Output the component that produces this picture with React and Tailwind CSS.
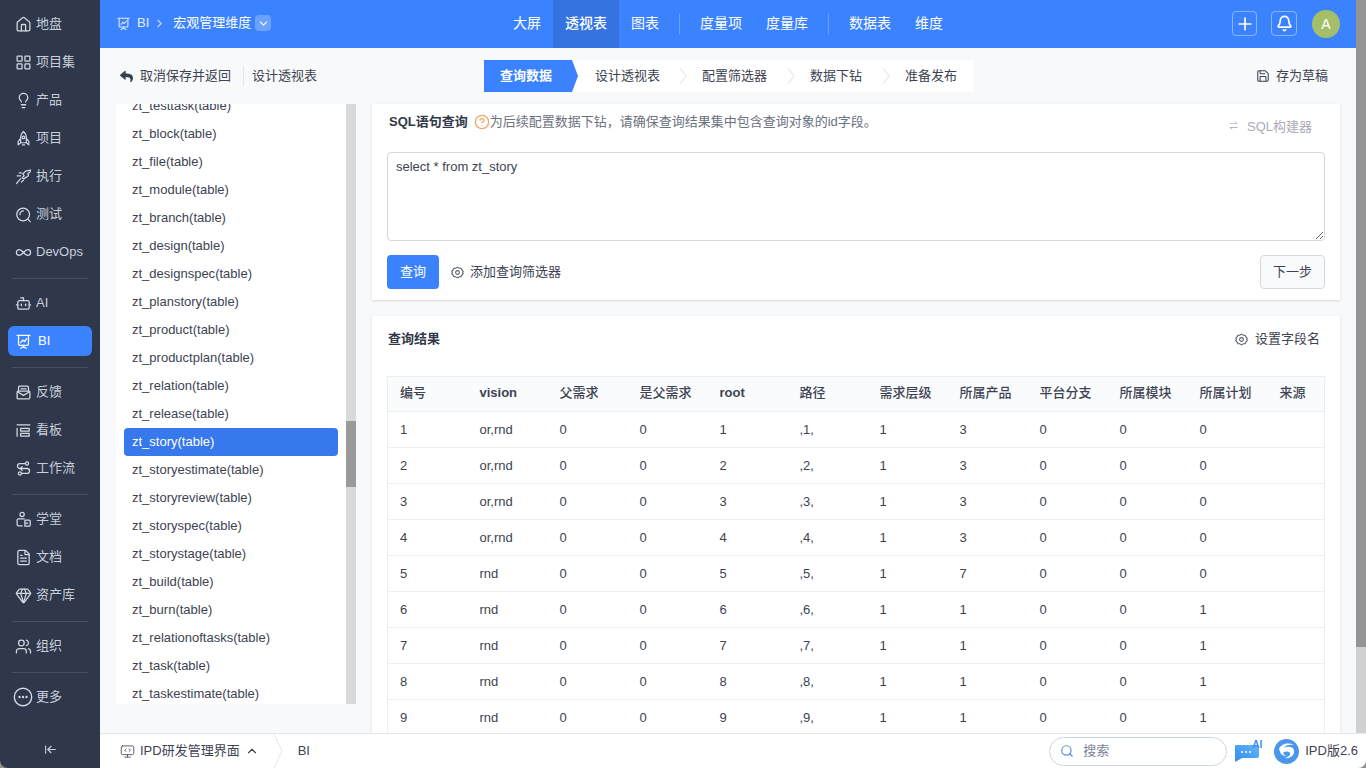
import React from "react";
import {
  ArrowLeftToLine, Bell, ChevronDown, ChevronRight, ChevronUp, FileText, Gem, Home,
  Infinity as InfinityIcon, LayoutGrid, Lightbulb, Plus, Save, Search, Users, Bot, CircleHelp,
} from "lucide-react";
import { FaReply } from "react-icons/fa";

const font = "font-['Liberation_Sans','Noto_Sans_CJK_SC',sans-serif]";

const IconBox = ({ children, size = 17, stroke = 1.5, className = "" }) => (
  <svg width={size} height={size} viewBox="0 0 24 24" fill="none" stroke="currentColor" strokeWidth={stroke} strokeLinecap="round" strokeLinejoin="round" className={className}>
    {children}
  </svg>
);

const BoardIcon = (p) => (
  <IconBox {...p} stroke={1.8}>
    <path d="M3 3.500h18M5 3.500v12.500a1.500 1.500 0 0 0 1.500 1.500h11a1.500 1.500 0 0 0 1.500-1.500V3.500" />
    <path d="M8 13.500l3-3.500 2.500 2 3-4M12 17.500v2M8 21.500l4-2 4 2" />
  </IconBox>
);
const RocketIcon = (p) => (
  <IconBox {...p} stroke={1.7}>
    <path d="M12 2c3 2.500 4 6 4 9v7H8v-7c0-3 1-6.500 4-9z" />
    <circle cx="12" cy="10.500" r="1.800" />
    <path d="M8 12l-3.500 4v5L8 18M16 12l3.500 4v5L16 18M10.500 21h3" />
  </IconBox>
);
const RunnerIcon = (p) => (
  <IconBox {...p} stroke={1.7}>
    <path d="M22 3l-6 1-5 4 2 3-3 3 3 1 6-4-1-3 3-2zM8 11H3M9 7H6M8 15l-6 7M12 17l-3 3" />
  </IconBox>
);
const QIcon = (p) => (
  <IconBox {...p} stroke={1.8}>
    <circle cx="11.500" cy="12" r="9" />
    <path d="M7 12a5 5 0 0 1 5-5M18 18.500l3.500 3.500" />
  </IconBox>
);
const MailIcon = (p) => (
  <IconBox {...p} stroke={1.8}>
    <path d="M5 10V4.500A1.500 1.500 0 0 1 6.500 3h11A1.500 1.500 0 0 1 19 4.500V10" />
    <rect x="3" y="10" width="18" height="11" rx="1.500" />
    <path d="M3.500 11l8.500 5 8.500-5M8.500 7h7" />
  </IconBox>
);
const KanbanIcon = (p) => (
  <IconBox {...p} stroke={1.8}>
    <path d="M3 4h18M3 9v11M8 9h12v4H8zM8 16h12v4H8z" />
  </IconBox>
);
const FlowIcon = (p) => (
  <IconBox {...p} stroke={1.8}>
    <path d="M14 5H7a3.500 3.500 0 0 0 0 7h10a3.500 3.500 0 0 1 0 7H9" />
    <circle cx="17" cy="5" r="2.200" />
    <circle cx="7" cy="19" r="2.200" />
    <path d="M10 9.500L7.500 12 10 14.500" />
  </IconBox>
);
const SchoolIcon = (p) => (
  <IconBox {...p} stroke={1.8}>
    <circle cx="10" cy="5" r="3" />
    <path d="M13 11H5a2 2 0 0 0-2 2v6a2 2 0 0 0 2 2h5" />
    <path d="M14 13h6a1.500 1.500 0 0 1 1.500 1.500V20a1.500 1.500 0 0 1-1.500 1.500h-6zM14 17h4" />
  </IconBox>
);
const MoreIcon = ({ className = "" }) => (
  <svg width="20" height="20" viewBox="0 0 20 20" className={`-ml-[2px] -mr-[1px] ${className}`}>
    <circle cx="10" cy="10" r="8.700" fill="none" stroke="currentColor" strokeWidth="1.400" />
    <circle cx="6.500" cy="10" r="1.200" fill="currentColor" />
    <circle cx="10" cy="10" r="1.200" fill="currentColor" />
    <circle cx="13.500" cy="10" r="1.200" fill="currentColor" />
  </svg>
);
const GearIcon = ({ size = 14, className = "" }) => (
  <svg width={size} height={size} viewBox="0 0 24 24" fill="none" stroke="currentColor" strokeWidth="2" strokeLinejoin="round" className={className}>
    <path d="M12 2l3 2 3.500.2 1.700 3L22.500 10 21.500 12l1 2-2.300 2.800-1.700 3L15 20l-3 2-3-2-3.500-.2-1.700-3L1.500 14l1-2-1-2 2.300-2.800 1.700-3L9 4z" />
    <circle cx="12" cy="12" r="3.500" />
  </svg>
);
const MonitorCode = ({ className = "" }) => (
  <IconBox size={15} className={className}>
    <rect x="2" y="3" width="20" height="14" rx="2" />
    <path d="M9.500 8L7.500 10l2 2M14.500 8l2 2-2 2M12 17v4M7.500 21h9" />
  </IconBox>
);
const Chevron = ({ className = "" }) => (
  <svg width="8" height="32" viewBox="0 0 8 32" fill="none" stroke="#e6e9ee" strokeWidth="1.200" className={className}>
    <path d="M1 8l6 8-6 8" />
  </svg>
);

const navGroups = [
  [["地盘", Home], ["项目集", LayoutGrid], ["产品", Lightbulb], ["项目", RocketIcon], ["执行", RunnerIcon], ["测试", QIcon], ["DevOps", InfinityIcon]],
  [["AI", Bot], ["BI", BoardIcon]],
  [["反馈", MailIcon], ["看板", KanbanIcon], ["工作流", FlowIcon]],
  [["学堂", SchoolIcon], ["文档", FileText], ["资产库", Gem]],
  [["组织", Users]],
  [["更多", MoreIcon]],
];

const tables = ["zt_testtask", "zt_block", "zt_file", "zt_module", "zt_branch", "zt_design", "zt_designspec", "zt_planstory", "zt_product", "zt_productplan", "zt_relation", "zt_release", "zt_story", "zt_storyestimate", "zt_storyreview", "zt_storyspec", "zt_storystage", "zt_build", "zt_burn", "zt_relationoftasks", "zt_task", "zt_taskestimate"];

const columns = ["编号", "vision", "父需求", "是父需求", "root", "路径", "需求层级", "所属产品", "平台分支", "所属模块", "所属计划", "来源"];
const rows = [
  ["1", "or,rnd", "0", "0", "1", ",1,", "1", "3", "0", "0", "0", ""],
  ["2", "or,rnd", "0", "0", "2", ",2,", "1", "3", "0", "0", "0", ""],
  ["3", "or,rnd", "0", "0", "3", ",3,", "1", "3", "0", "0", "0", ""],
  ["4", "or,rnd", "0", "0", "4", ",4,", "1", "3", "0", "0", "0", ""],
  ["5", "rnd", "0", "0", "5", ",5,", "1", "7", "0", "0", "0", ""],
  ["6", "rnd", "0", "0", "6", ",6,", "1", "1", "0", "0", "1", ""],
  ["7", "rnd", "0", "0", "7", ",7,", "1", "1", "0", "0", "1", ""],
  ["8", "rnd", "0", "0", "8", ",8,", "1", "1", "0", "0", "1", ""],
  ["9", "rnd", "0", "0", "9", ",9,", "1", "1", "0", "0", "1", ""],
];

function Sidebar() {
  return (
    <aside className="w-[100px] shrink-0 h-full bg-[#2e384a] rounded-bl-lg flex flex-col pt-[5px] text-[13px] text-[#c8cedb]">
      {navGroups.map((group, i) => (
        <div key={i} className={i > 0 ? "border-t border-[#465063] mx-3 pt-[5px] mt-[7px]" : "mx-3"}>
          {group.map(([label, Icon]) =>
            label === "BI" ? (
              <div key={label} className="h-[30px] -mx-1 my-1 bg-[#3b82ff] rounded-md flex items-center pl-[7px] gap-[6px] text-white">
                <Icon size={17} />
                <span>{label}</span>
              </div>
            ) : (
              <div key={label} className="h-[38px] -mx-3 flex items-center pl-[15px] gap-[4px]">
                <Icon size={17} strokeWidth={1.8} className="text-[#d3d8e2] shrink-0" />
                <span>{label}</span>
              </div>
            )
          )}
        </div>
      ))}
      <div className="mt-auto h-[38px] flex items-center justify-center text-[#c8cedb]">
        <ArrowLeftToLine size={13} strokeWidth={2} />
      </div>
    </aside>
  );
}

function Header() {
  const nav = [["大屏"], ["透视表", true], ["图表"], null, ["度量项"], ["度量库"], null, ["数据表"], ["维度"]];
  return (
    <header className="h-12 shrink-0 bg-[#3b82ff] flex items-center pl-4 pr-4 text-white text-[13px]">
      <div className="w-[385px] flex items-center pb-[2px]">
        <BoardIcon size={15} className="text-[#dbe7ff]" />
        <span className="ml-[6px] text-[#e6efff]">BI</span>
        <ChevronRight size={13} strokeWidth={2} className="mx-[4px] text-[#c6dafc]" />
        <span className="ml-[3px]">宏观管理维度</span>
        <span className="ml-1 w-4 h-4 bg-white/25 rounded-sm flex items-center justify-center">
          <ChevronDown size={13} />
        </span>
      </div>
      <nav className="flex items-center h-full text-sm">
        {nav.map((n, i) =>
          n ? (
            <div key={i} className={`h-full px-3 pb-[2px] flex items-center ${n[1] ? "bg-[#3573e0] font-medium" : ""}`}>{n[0]}</div>
          ) : (
            <div key={i} className="w-px h-5 bg-white/25 mx-2" />
          )
        )}
      </nav>
      <div className="ml-auto flex items-center pb-px">
        <button className="w-[25px] h-[25px] border border-white/40 rounded flex items-center justify-center"><Plus size={20} strokeWidth={2} /></button>
        <button className="ml-[14px] w-[26px] h-[25px] border border-white/40 rounded flex items-center justify-center"><Bell size={17} strokeWidth={2.4} /></button>
        <div className="ml-[15px] w-7 h-7 rounded-full bg-[#a4bf6a] flex items-center justify-center text-sm">A</div>
      </div>
    </header>
  );
}

function Toolbar() {
  const steps = [["设计透视表", "w-[107px]"], ["配置筛选器", "w-[108px]"], ["数据下钻", "w-[95px]"], ["准备发布", ""]];
  return (
    <div className="h-14 shrink-0 flex items-center pl-5 pr-7 text-[13px] text-[#3d4352]">
      <div className="w-[364px] flex items-center">
        <FaReply size={13} className="text-[#39404d] mr-[7px]" />
        <span>取消保存并返回</span>
        <span className="w-px h-5 bg-[#e3e6ec] ml-[12px] mr-[8px]" />
        <span>设计透视表</span>
      </div>
      <div className="h-8 w-[489px] bg-white flex items-center">
        <div className="w-[94px] h-full bg-[#3b82ff] text-white font-bold pl-4 flex items-center [clip-path:polygon(0_0,88px_0,94px_50%,88px_100%,0_100%)]">查询数据</div>
        <div className="pl-[17px] flex items-center">
          {steps.map(([label, w], i) => (
            <div key={label} className={`flex items-center ${w}`}>
              <span>{label}</span>
              {i < 3 && <Chevron className="ml-auto mr-[15px]" />}
            </div>
          ))}
        </div>
      </div>
      <div className="ml-auto flex items-center gap-[6px]">
        <Save size={14} strokeWidth={1.8} />
        <span>存为草稿</span>
      </div>
    </div>
  );
}

function TableList() {
  return (
    <div className="w-[240px] h-[600px] shrink-0 bg-white flex overflow-hidden">
      <div className="flex-1 px-2 overflow-hidden text-[13px] text-[#3d4352]">
        <div className="-mt-[12px]">
          {tables.map((t) => (
            <div key={t} className={`h-7 pl-2 flex items-center rounded-sm ${t === "zt_story" ? "bg-[#3779ec] text-white" : ""}`}>{t}(table)</div>
          ))}
        </div>
      </div>
      <div className="w-[10px] bg-[#d9d9d9] pt-[317px]">
        <div className="h-[66px] bg-[#9a9a9a]" />
      </div>
    </div>
  );
}

function SqlCard() {
  return (
    <section className="h-[196px] bg-white shadow-sm px-[15px] pt-[10px] shrink-0">
      <div className="flex items-center h-4">
        <span className="pl-[2px] font-bold text-[13px] text-[#313848]">SQL语句查询</span>
        <CircleHelp size={16} strokeWidth={2} className="ml-[6px] text-[#f0a868]" />
        <span className="text-[13px] text-[#6b7280]">为后续配置数据下钻，请确保查询结果集中包含查询对象的id字段。</span>
        <span className="ml-auto mr-[13px] mt-[10px] flex items-center text-[13px] text-[#a9adb5]">
          <span className="text-[9px] mr-[9px]">⇌</span>SQL构建器
        </span>
      </div>
      <textarea
        readOnly
        defaultValue="select * from zt_story"
        className="block mt-[22px] w-full h-[89px] border border-[#d4d7dd] rounded-sm px-2 py-[4px] text-[13px] text-[#3d4352] outline-none"
      />
      <div className="mt-[14px] flex items-center">
        <button className="w-[52px] h-[34px] bg-[#3b82ff] text-white text-[13px] rounded-sm">查询</button>
        <GearIcon size={13} className="ml-3 text-[#555b68]" />
        <span className="ml-[6px] text-[13px] text-[#3d4352]">添加查询筛选器</span>
        <button className="ml-auto w-[65px] h-[34px] border border-[#d4d7dd] bg-[#f9fafb] rounded-sm text-[13px] text-[#3d4352]">下一步</button>
      </div>
    </section>
  );
}

function ResultCard() {
  return (
    <section className="flex-1 min-h-0 mt-4 bg-white shadow-sm px-4 overflow-hidden">
      <div className="h-[60px] flex items-center pb-[14px] text-[13px] text-[#3d4352]">
        <span className="font-bold text-[#313848]">查询结果</span>
        <span className="ml-auto mr-1 flex items-center gap-[7px]"><GearIcon size={13} className="text-[#555b68]" />设置字段名</span>
      </div>
      <table className="w-[938px] -ml-px table-fixed border-collapse border border-[#eceef2] text-[13px] text-[#3d4352]">
        <thead className="bg-[#fafbfd]">
          <tr className="h-[35px] border-b border-[#eceef2]">
            {columns.map((c, i) => (
              <th key={c} className={`${i === 11 ? "w-[57px]" : "w-[80px]"} pl-3 pb-[2px] text-left ${c === "vision" || c === "root" ? "font-bold" : "font-medium"}`}>{c}</th>
            ))}
          </tr>
        </thead>
        <tbody>
          {rows.map((r) => (
            <tr key={r[0]} className="h-9 border-b border-[#eceef2]">
              {r.map((v, i) => <td key={i} className="pl-3">{v}</td>)}
            </tr>
          ))}
        </tbody>
      </table>
    </section>
  );
}

function BottomBar() {
  return (
    <footer className="h-[35px] shrink-0 bg-white border-t border-[#e5e7eb] rounded-br-lg flex items-center text-[13px] text-[#3d4352]">
      <MonitorCode className="ml-5 text-[#555b68]" />
      <span className="ml-[5px]">IPD研发管理界面</span>
      <ChevronUp size={14} className="ml-[5px]" />
      <svg width="10" height="34" viewBox="0 0 10 34" fill="none" stroke="#e5e7eb" className="ml-[14px]"><path d="M1 0l8 17-8 17" /></svg>
      <span className="ml-[15px]">BI</span>
      <div className="ml-auto w-[178px] h-[29px] rounded-full border border-[#cdd6e6] flex items-center pl-[10px] gap-[9px] text-[#7b8494]">
        <Search size={14} className="text-[#5f8fdc]" />
        <span>搜索</span>
      </div>
      <div className="relative ml-[7px] w-7 h-6">
        <svg width="25" height="18" viewBox="0 0 25 18" className="absolute left-0 top-[5px]">
          <defs>
            <linearGradient id="aiBubble" x1="0" y1="1" x2="1" y2="0">
              <stop offset="0" stopColor="#2f8cf2" />
              <stop offset="1" stopColor="#66b5f7" />
            </linearGradient>
          </defs>
          <path d="M2 1h21a2 2 0 0 1 2 2v9a2 2 0 0 1-2 2H8l-7 4V2a1 1 0 0 1 1-1z" fill="url(#aiBubble)" />
          <circle cx="8" cy="8" r="1" fill="#fff" /><circle cx="12" cy="8" r="1" fill="#fff" /><circle cx="16" cy="8" r="1" fill="#fff" />
        </svg>
        <span className="absolute right-0 -top-[2px] text-[10px] font-bold text-[#3b8df0]">AI</span>
      </div>
      <svg width="25" height="25" viewBox="0 0 25 25" className="ml-[12px] shrink-0">
        <circle cx="12.500" cy="12.500" r="12.500" fill="#4a96ea" />
        <path d="M5 10c2-5 9-7 15-4-4-1-9 0-10 3 3-2 9-2 10 2 1 5-4 9-9 8 3-1 6-3 5-5-1-2-5-2-7 0 1 2 3 3 5 2-3 2-7 0-8-3-.4-1-.4-2-1-3z" fill="#fff" />
      </svg>
      <span className="ml-[6px] mr-2">IPD版2.6</span>
    </footer>
  );
}

export default function App() {
  return (
    <div className={`${font} h-screen w-full overflow-hidden flex bg-[#8f8f8f]`}>
      <Sidebar />
      <div className="flex-1 min-w-0 flex flex-col">
        <div className="flex-1 min-h-0 flex">
          <main className="flex-1 min-w-0 bg-[#f8f9fb] flex flex-col">
            <Header />
            <Toolbar />
            <div className="flex-1 min-h-0 flex gap-4 pl-4 pr-4">
              <TableList />
              <div className="flex-1 min-w-0 flex flex-col">
                <SqlCard />
                <ResultCard />
              </div>
            </div>
          </main>
          <div className="w-[10px] shrink-0 bg-[#d0d0d0]">
            <div className="h-[647px] bg-[#949494]" />
          </div>
        </div>
        <BottomBar />
      </div>
    </div>
  );
}
